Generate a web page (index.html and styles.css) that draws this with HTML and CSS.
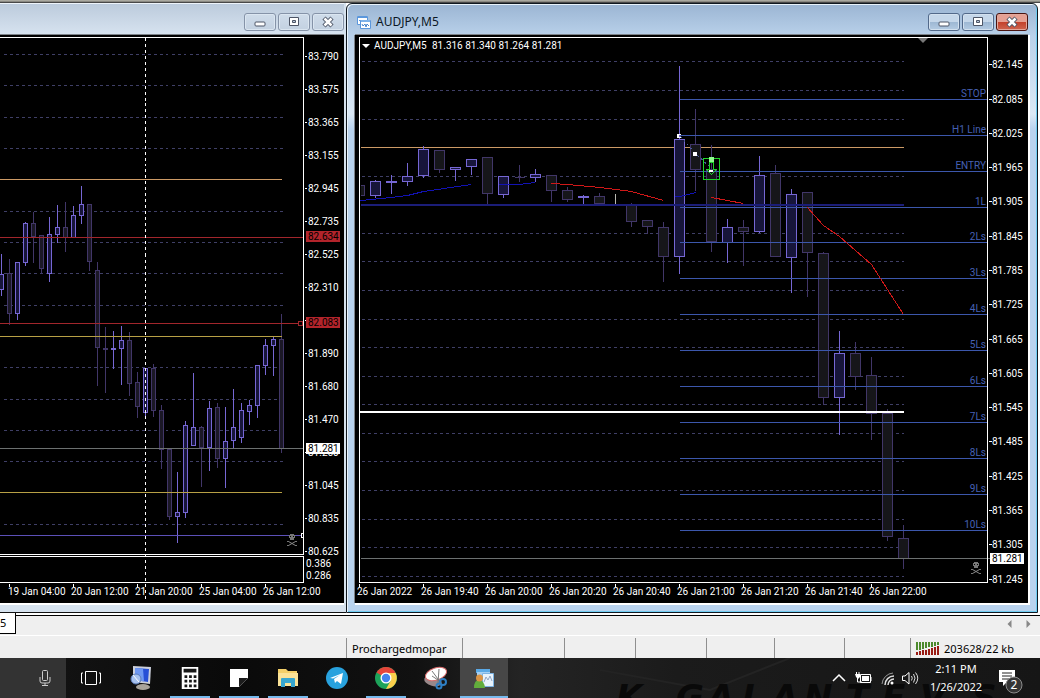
FILE: index.html
```html
<!DOCTYPE html>
<html lang="en">
<head>
<meta charset="utf-8">
<title>AUDJPY,M5</title>
<link rel="stylesheet" href="styles.css">
</head>
<body>
<svg class="defs" aria-hidden="true">
  <defs>
    <symbol id="i-min" viewBox="0 0 14 12"><rect x="2" y="6" width="10" height="4" rx="1" fill="#fff" stroke="#4d5566"/></symbol>
    <symbol id="i-max" viewBox="0 0 14 12"><path d="M2.500 1.500h9v8h-9z" fill="#fff" stroke="#4d5566"/><path d="M5.500 4.500h3v2h-3z" fill="#b9c8da" stroke="#4d5566"/></symbol>
    <symbol id="i-close" viewBox="0 0 14 12"><path d="M3 2l8 8M11 2l-8 8" stroke="#4d5566" stroke-width="4.500"/><path d="M3.500 2.500l7 7M10.500 2.500l-7 7" stroke="#fff" stroke-width="2.500"/></symbol>
    <symbol id="skull" viewBox="0 0 10 13"><path d="M3 0h4v1h1v3H7v2H3V4H2V1h1z" fill="#777"/><path d="M3 2h1v1H3zM6 2h1v1H6z" fill="#000"/><path d="M1.500 7.500l7 4M8.500 7.500l-7 4" stroke="#888"/><path d="M0 7.500h2M8 7.500h2M0 11.500h2M8 11.500h2" stroke="#777"/></symbol>
  </defs>
</svg>
<main class="workspace">
  <section class="window window-back" aria-label="Chart window">
    <header class="titlebar">
      <div class="controls">
        <button class="control" aria-label="Minimize"><svg viewBox="0 0 14 12"><use href="#i-min"/></svg></button>
        <button class="control" aria-label="Maximize"><svg viewBox="0 0 14 12"><use href="#i-max"/></svg></button>
        <button class="control" aria-label="Close"><svg viewBox="0 0 14 12"><use href="#i-close"/></svg></button>
      </div>
    </header>
    <svg class="chart" viewBox="0 35 344 568" role="img" aria-label="Four hour candles">
      <g class="crisp" transform="translate(.5 .5)">
        <path class="grid" d="M3 54H282M3 85H282M3 117H282M3 148H282M3 211H282M3 242H282M3 273H282M3 305H282M3 367H282M3 399H282M3 430H282M3 461H282M3 524H282"/>
        <path class="bear" d="M9 258V324M33 211V262M41 235V273M65 201V251M89 204V270M97 261V385M105 326V392M129 331V395M137 371V417M153 363V416M161 404V468M169 448V519M201 425V486M217 402V467M281 313V452"/>
        <path class="bear body" d="M7 273h4v40h-4zM31 223h4v13h-4zM39 235h4v33h-4zM63 227h4v10h-4zM87 204h4v57h-4zM95 270h4v77h-4zM103 348h4v1h-4zM127 340h4v43h-4zM135 382h4v24h-4zM151 368h4v42h-4zM159 410h4v39h-4zM167 449h4v67h-4zM199 427h4v20h-4zM215 407h4v51h-4zM279 339h4v109h-4z"/>
        <path class="bull" d="M1 253V295M17 261V319M25 221V265M49 216V281M57 204V242M73 205V237M81 185V223M113 330V368M121 325V384M145 367V417M177 471V542M185 420V517M193 372V445M209 400V470M225 406V487M233 388V448M241 402V442M249 399V424M257 364V417M265 338V374M273 335V375"/>
        <path class="bull body" d="M-1 274h4v15h-4zM15 262h4v51h-4zM23 223h4v39h-4zM47 234h4v39h-4zM55 227h4v7h-4zM71 215h4v22h-4zM79 204h4v11h-4zM111 348h4v1h-4zM119 340h4v8h-4zM143 368h4v44h-4zM175 512h4v4h-4zM183 425h4v87h-4zM191 427h4v18h-4zM207 408h4v39h-4zM223 441h4v17h-4zM231 427h4v13h-4zM239 410h4v27h-4zM247 405h4v6h-4zM255 365h4v40h-4zM263 345h4v20h-4zM271 339h4v6h-4z"/>
        <path class="orange" d="M-1 179H281"/>
        <path class="gold" d="M-1 336H281M-1 492H281"/>
        <path class="red" d="M-1 237H303M-1 323H298M298 321h4v4h-4z"/>
        <path class="bid" d="M-1 448H303"/>
        <path class="violet" d="M-1 535H300"/>
        <path class="cursor" d="M145 37V600"/>
        <path class="frame" d="M-1 37H303V554H-1M-1 556H303V582H-1M303 533h-2v4h2"/>
        <path class="frame" d="M304 56h2M304 89h2M304 122h2M304 155h2M304 188h2M304 221h2M304 254h2M304 287h2M304 320h2M304 353h2M304 386h2M304 419h2M304 452h2M304 485h2M304 518h2M304 551h2M9 583v3M73 583v3M137 583v3M201 583v3M265 583v3"/>
      </g>
      <use href="#skull" x="287" y="534" width="10" height="13"/>
      <g class="label">
        <text x="308" y="60">83.790</text><text x="308" y="93">83.575</text><text x="308" y="126">83.365</text><text x="308" y="159">83.155</text><text x="308" y="192">82.945</text><text x="308" y="225">82.735</text><text x="308" y="258">82.525</text><text x="308" y="291">82.310</text><text x="308" y="357">81.890</text><text x="308" y="390">81.680</text><text x="308" y="423">81.470</text><text x="308" y="456">81.260</text><text x="308" y="489">81.045</text><text x="308" y="522">80.835</text><text x="308" y="555">80.625</text>
        <text x="306" y="567">0.386</text><text x="306" y="579">0.286</text>
        <text x="8" y="595">19 Jan 04:00</text><text x="71" y="595">20 Jan 12:00</text><text x="135" y="595">21 Jan 20:00</text><text x="199" y="595">25 Jan 04:00</text><text x="263" y="595">26 Jan 12:00</text>
      </g>
      <path class="tag-red" d="M306 231h34v11h-34zM306 317h34v11h-34z"/>
      <path class="tag-bid" d="M306 443h34v11h-34z"/>
      <g class="label tag-text"><text x="308" y="240">82.634</text><text x="308" y="326">82.083</text><text x="308" y="452">81.281</text></g>
    </svg>
  </section>
  <section class="window window-front" aria-label="AUDJPY,M5">
    <header class="titlebar">
      <svg class="app-icon" viewBox="0 0 14 14"><path d="M.500 1.500h10v8H.500z" fill="#fff" stroke="#5b97dc"/><path d="M1 2h9" stroke="#5b97dc" stroke-width="2"/><path d="M2 6l1-1 1 2 1-2" fill="none" stroke="#5b97dc"/><path d="M3.500 5.500h10v8h-10z" fill="#fff" stroke="#5b97dc"/><path d="M4 6h9" stroke="#7db2ea" stroke-width="2"/><path d="M5 9l1 2 2-2 1 3 1-3 2 2" fill="none" stroke="#4a86cc"/></svg>
      <h1 class="title">AUDJPY,M5</h1>
      <div class="controls">
        <button class="control" aria-label="Minimize"><svg viewBox="0 0 14 12"><use href="#i-min"/></svg></button>
        <button class="control" aria-label="Maximize"><svg viewBox="0 0 14 12"><use href="#i-max"/></svg></button>
        <button class="control control-close" aria-label="Close"><svg viewBox="0 0 14 12"><use href="#i-close"/></svg></button>
      </div>
    </header>
    <svg class="chart" viewBox="355 35 673 568" role="img" aria-label="AUDJPY five minute candles">
      <g class="crisp" transform="translate(.5 .5)">
        <path class="grid" d="M361 61H903M361 90H903M361 119H903M361 176H903M361 233H903M361 261H903M361 290H903M361 319H903M361 347H903M361 376H903M361 404H903M361 433H903M361 461H903M361 490H903M361 519H903M361 547H903M361 576H903"/>
        <path class="orange" d="M360 147H903"/>
        <path class="bear" d="M439 150V172M487 157V204M519 164V181M551 175V201M567 186V201M599 192V203M631 202V226M647 219V233M663 221V281M695 108V190M711 144V251M743 219V265M775 164V256M807 191V296M823 251V404M855 341V389M871 356V439M887 408V540M903 524V568"/>
        <path class="bear body bear-wide" d="M360 185h4v10h-4M434 150h10v19h-10zM482 157h10v36h-10zM514 177h10M546 175h10v15h-10zM562 190h10v9h-10zM594 196h10v7h-10zM626 205h10v16h-10zM642 220h10v6h-10zM658 227h10v29h-10zM690 144h10v25h-10zM706 169h10v72h-10zM738 227h10v4h-10zM770 173h10v83h-10zM802 192h10v60h-10zM818 253h10v144h-10zM850 353h10v23h-10zM866 375h10v38h-10zM882 413h10v123h-10zM898 538h10v20h-10z"/>
        <path class="bull" d="M375 179V197M391 174V193M407 162V185M423 145V177M455 166V180M471 158V174M503 176V197M535 168V181M583 194V204M679 65V273M727 218V262M759 155V232M791 188V292M839 330V434"/>
        <path class="bull body" d="M370 181h10v14h-10zM386 181h10v1h-10zM402 176h10v5h-10zM418 149h10v26h-10zM450 167h10v2h-10zM466 159h10v7h-10zM498 176h10v18h-10zM530 174h10v3h-10zM578 196h10v1h-10zM674 139h10v117h-10zM722 227h10v15h-10zM754 175h10v56h-10zM786 194h10v63h-10zM834 353h10v44h-10z"/>
        <path class="pale" d="M615 193V204"/>
        <path class="navy" d="M360 204H903M360 205H903"/>
        <path class="level" d="M679 99H987M679 135H987M679 171H987M679 207H987M679 242H987M679 278H987M679 314H987M679 350H987M679 386H987M679 422H987M679 458H987M679 494H987M679 530H987"/>
        <path class="bid" d="M360 558H991"/>
        <path class="ma-blue" d="M360 200L391 197 407 195 423 191 471 184M498 184H519L535 182M674 196H679L696 192"/>
        <path class="ma-red" d="M551 183L567 184 600 187 631 191 663 200M711 197L727 200 743 203M807 207L823 225 839 236 855 250 871 264 903 314"/>
        <path class="frame" d="M359 411H903M359 412H903M359 582V37H987V582H359M988 64h3M988 99h3M988 133h3M988 167h3M988 201h3M988 236h3M988 270h3M988 304h3M988 339h3M988 373h3M988 407h3M988 441h3M988 476h3M988 510h3M988 544h3M988 579h3M359 583v3M423 583v3M487 583v3M551 583v3M615 583v3M679 583v3M743 583v3M807 583v3M871 583v3"/>
        <path class="trade-line" d="M680 136L695 153 711 168"/>
        <path class="trade-box" d="M703 158h16v21h-16z"/>
        <path class="trade-box" d="M709 162V169h-3l5 5 5-5h-3V162z"/>
      </g>
      <path fill="#fff" d="M677 134h4v1h-2v2h2v1h-4zM693 152h4v4h-4zM709 170h4v2h-4z"/>
      <path fill="#8dfc8d" d="M709 157h5v5h-5z"/>
      <path fill="#fff" d="M362 44h8l-4 4z"/>
      <path fill="#777" d="M918 38h10l-5 5z"/>
      <use href="#skull" x="971" y="562" width="10" height="13"/>
      <g class="label">
        <text x="374" y="49">AUDJPY,M5</text><text x="432" y="49">81.316 81.340 81.264 81.281</text>
        <text x="992" y="68">82.145</text><text x="992" y="103">82.085</text><text x="992" y="137">82.025</text><text x="992" y="171">81.965</text><text x="992" y="205">81.905</text><text x="992" y="240">81.845</text><text x="992" y="274">81.785</text><text x="992" y="308">81.725</text><text x="992" y="343">81.665</text><text x="992" y="377">81.605</text><text x="992" y="411">81.545</text><text x="992" y="445">81.485</text><text x="992" y="480">81.425</text><text x="992" y="514">81.365</text><text x="992" y="548">81.305</text><text x="992" y="583">81.245</text>
        <text x="357" y="595">26 Jan 2022</text><text x="421" y="595">26 Jan 19:40</text><text x="485" y="595">26 Jan 20:00</text><text x="549" y="595">26 Jan 20:20</text><text x="613" y="595">26 Jan 20:40</text><text x="677" y="595">26 Jan 21:00</text><text x="741" y="595">26 Jan 21:20</text><text x="805" y="595">26 Jan 21:40</text><text x="869" y="595">26 Jan 22:00</text>
      </g>
      <path class="tag-bid" d="M990 553h34v11h-34z"/>
      <g class="label tag-text"><text x="992" y="562">81.281</text></g>
      <g class="label level-text">
        <text x="986" y="97">STOP</text><text x="986" y="133">H1 Line</text><text x="986" y="169">ENTRY</text><text x="986" y="205">1L</text><text x="986" y="240">2Ls</text><text x="986" y="276">3Ls</text><text x="986" y="312">4Ls</text><text x="986" y="348">5Ls</text><text x="986" y="384">6Ls</text><text x="986" y="420">7Ls</text><text x="986" y="456">8Ls</text><text x="986" y="492">9Ls</text><text x="986" y="528">10Ls</text>
      </g>
    </svg>
  </section>
</main>
<nav class="tabs" aria-label="Charts">
  <button class="tab">5</button>
  <div class="tab-scroll">
    <button class="arrow" aria-label="Previous"><svg viewBox="0 0 5 8"><path d="M4.500 0v8L.500 4z"/></svg></button>
    <button class="arrow" aria-label="Next"><svg viewBox="0 0 5 8"><path d="M.500 0v8l4-4z"/></svg></button>
  </div>
</nav>
<div class="status">
  <span class="cell"></span><span class="cell">Prochargedmopar</span><span class="cell"></span><span class="cell"></span><span class="cell"></span><span class="cell"></span><span class="cell"></span><span class="cell"></span>
  <span class="cell"><svg class="signal" viewBox="0 0 24 13"><path d="M1 0v8M4 0v8M7 0v7M10 0v6M13 0v5M16 0v5M19 0v4M22 0v3" stroke="#4c8a2c" stroke-width="2"/><path d="M1 10v3M4 9v4M7 8v5M10 8v5M13 7v6M16 6v7M19 5v8M22 4v9" stroke="#9a1c14" stroke-width="2"/></svg>203628/22 kb</span>
</div>
<footer class="taskbar">
  <svg class="wallpaper" viewBox="0 0 440 40" preserveAspectRatio="xMaxYMin slice" aria-hidden="true"><path d="M0 12L110 32 190 0" class="streak"/><text y="51" x="16 76 108 142 172 204 246 282 320 372">KGALANTEVS</text></svg>
  <button class="mic" aria-label="Voice search"><svg viewBox="0 0 12 16"><rect x="3.500" y=".5" width="5" height="10" rx="1" fill="none" stroke="#ccc"/><path d="M1 7v4q0 2 2 2h6q2 0 2-2V7M6 13v2.500M3 15.500h6" fill="none" stroke="#ccc"/></svg></button>
  <button class="task task-view" aria-label="Task view"><svg viewBox="0 0 22 22"><path d="M5.500 4.500h11v13h-11zM3 6H1.500v10H3M19 6h1.500v10H19" fill="none" stroke="#fff"/></svg></button>
  <button class="task" aria-label="Remote desktop"><svg viewBox="0 0 22 22"><ellipse cx="13" cy="20" rx="7" ry="3" fill="#a9a49c"/><path d="M3 -1l18 1-1 17-17-2z" fill="#ccd0dc"/><path d="M5 1l14 1-1 13-13-2z" fill="#274fd6"/><path d="M5 1l8 .5 1 13-9-1.500z" fill="#6f98f2"/><circle cx="6" cy="12" r="5" fill="#a7c2ef" stroke="#5b7bb8"/><path d="M3 8l6 7" stroke="#fff"/></svg></button>
  <button class="task open" aria-label="Calculator"><svg viewBox="0 0 22 24"><path d="M2 0h18v24H2z" fill="#fff"/><path d="M4 2h14v4H4zM5 9h3v3H5zM10 9h3v3h-3zM15 9h3v3h-3zM5 14h3v3H5zM10 14h3v3h-3zM15 14h3v3h-3zM5 19h3v3H5zM10 19h3v3h-3zM15 19h3v3h-3z" fill="#171717"/></svg></button>
  <button class="task open" aria-label="Sticky notes"><svg viewBox="0 0 22 22"><path d="M2 2h18v9l-9 9H2z" fill="#fff"/><path d="M11 11h9l-9 9z" fill="#1c1c1c"/></svg></button>
  <button class="task open" aria-label="File explorer"><svg viewBox="0 0 22 22"><path d="M1 2h8l2 2h9v15H1z" fill="#f3cf69"/><path d="M1 6h20v13H1z" fill="#fae297"/><path d="M4 20v-8q0-1 1-1h12q1 0 1 1v8h-4v-4H8v4z" fill="#37a6cf"/></svg></button>
  <button class="task" aria-label="Telegram"><svg viewBox="0 0 22 22"><circle cx="11" cy="11" r="11" fill="#28a2de"/><path d="M4 11l13-5-2 11-4-3-2 2-1-4 6-4-7 3.500z" fill="#fff"/></svg></button>
  <button class="task open" aria-label="Chrome"><svg viewBox="0 0 22 22"><circle cx="11" cy="11" r="11" fill="#1da35a"/><path d="M11 11L1.500 5.500A11 11 0 0 1 20.500 5.500z" fill="#e6453a"/><path d="M11 11V6h9.600A11 11 0 0 1 11 22l4.500-8z" fill="#fcd04c"/><circle cx="11" cy="11" r="5.500" fill="#fff"/><circle cx="11" cy="11" r="4.200" fill="#4383ee"/></svg></button>
  <button class="task" aria-label="Snipping tool"><svg viewBox="0 0 22 22"><ellipse cx="9" cy="14" rx="9" ry="5" fill="#99888a" transform="rotate(15 9 14)"/><ellipse cx="12" cy="7" rx="11" ry="6" fill="#fff" stroke="#d56a6a" transform="rotate(-18 12 7)"/><path d="M8 4l9 12M15 2l-1 14M8 9l9 6" stroke="#777"/><circle cx="19" cy="15" r="3" fill="none" stroke="#2e7fc4" stroke-width="2"/><circle cx="15" cy="19" r="2.500" fill="none" stroke="#2e7fc4" stroke-width="2"/></svg></button>
  <button class="task open active" aria-label="Trading terminal"><svg viewBox="0 0 22 22"><path d="M3 2h14v4H3z" fill="#5aa9e6"/><path d="M4 5h13v12H4z" fill="#a5d0f3"/><path d="M9.500 6.500h11v13h-11z" fill="#e9f3fc" stroke="#7db4e4"/><path d="M11 15l2-5 2 3 2-4 2 5" fill="none" stroke="#91a6c4"/><path d="M1 21q0-8 5-8t6 8z" fill="#62ad3c"/><circle cx="6.500" cy="11" r="3.500" fill="#d99445"/></svg></button>
  <div class="tray">
    <svg class="tray-icon" viewBox="0 0 20 20"><path d="M4 13l6-6 6 6" fill="none" stroke="#fff" stroke-width="1.500"/></svg>
    <svg class="tray-icon" viewBox="0 0 20 20"><path d="M7.500 6.500h10v8h-10zM18 9v4" fill="none" stroke="#fff"/><path d="M9 8h7v5H9zM2 6h5v3L5 11 3 9z" fill="#fff"/><path d="M3.500 4v3M6 4v3M4.500 10v4H9" stroke="#fff" fill="none"/></svg>
    <svg class="tray-icon" viewBox="0 0 20 20"><path d="M5 16A12 12 0 0 1 16 5" fill="none" stroke="#999"/><path d="M8 17a9 9 0 0 1 9-9M11 17a6 6 0 0 1 6-6" fill="none" stroke="#ddd" stroke-width="1.500"/><circle cx="15" cy="15" r="1.500" fill="#fff"/></svg>
    <svg class="tray-icon" viewBox="0 0 20 20"><path d="M1.500 8v4.500H4l4 3.500V4.500L4 8z" fill="none" stroke="#fff"/><path d="M10.500 8q1.500 2 0 4.500M12.500 6q3 4 0 8.500M14.500 4.500q4.500 5.500 0 11.500" fill="none" stroke="#ddd"/></svg>
    <div class="clock"><time>2:11 PM</time><time>1/26/2022</time></div>
    <button class="notices" aria-label="Notifications"><svg viewBox="0 0 26 26"><path d="M1 2h16v12H9l-4 4v-4H1z" fill="#fff"/><path d="M4 5h10M4 8h10M4 11h8" stroke="#222"/><circle cx="16" cy="17" r="8" fill="#343434" stroke="#8b8b8b"/><text x="16" y="21" text-anchor="middle" class="badge">2</text></svg></button>
  </div>
</footer>
</body>
</html>
```
FILE: styles.css
```css
* { box-sizing: border-box; }
body {
  margin: 0;
  min-height: 100vh;
  display: flex;
  flex-direction: column;
  background: #efefef;
  font-family: "Noto Sans", "Open Sans", sans-serif;
  overflow-x: hidden;
}
button { padding: 0; border: 0; background: none; font: inherit; color: inherit; }
svg { display: block; overflow: visible; }
.defs { position: absolute; width: 0; height: 0; }

.workspace {
  display: grid;
  grid-template-columns: 346fr 694fr;
  padding-top: 3px;
  background: linear-gradient(#aaa9a0 0 1px, #8a8982 1px 2px, #484848 2px 3px, #fff 3px);
}
.window { min-width: 0; }
.window-back {
  padding-right: 2px;
  padding-bottom: 9px;
  background: #d6e2ee;
  border-bottom: 1px solid #111;
}
.window-front {
  margin-right: 2px;
  padding: 0 9px 8px 8px;
  border: 1px solid #101820;
  border-radius: 6px 6px 0 0;
  background: linear-gradient(#9bb5d3, #b9d1ea 32px, #dbe9f6 110px, #b9d3ee 125px);
  box-shadow: inset 1px 1px #e9f3fb, inset -1px -1px #6fcdf2;
}
.window-front .titlebar { height: 31px; }
.titlebar {
  display: flex;
  align-items: center;
  height: 32px;
  padding-top: 4px;
}
.window-back .titlebar { background: linear-gradient(#bccbdc, #d7e3f0); border-top: 1px solid #eef4fa; }
.app-icon { width: 14px; height: 14px; margin-left: 2px; }
.title { margin: 0 0 0 5px; font-size: 12px; line-height: 16px; font-weight: 400; color: #0b1724; }
.controls { display: flex; gap: 2px; margin-left: auto; }
.control {
  display: grid;
  place-items: center;
  width: 32px;
  height: 18px;
  border: 1px solid #8593a8;
  border-radius: 3px;
  background: linear-gradient(#cfdcea, #c3d1e1);
  box-shadow: inset 0 0 0 1px #dbe6f1;
}
.window-front .control {
  border-color: #52698a;
  background: linear-gradient(#c5d7ea 50%, #9db7d3 50%, #b4cbe3);
  box-shadow: inset 0 0 0 1px #d3e1ef;
}
.window-front .control-close {
  border-color: #4a1410;
  background: linear-gradient(#e5a093 50%, #c3402a 50%, #cf6650);
  box-shadow: inset 0 0 0 1px #e3a79b;
}
.control svg { width: 14px; height: 12px; }

.chart { width: 100%; height: auto; background: #000; box-shadow: 0 -1px #7d8288, 0 2px #fff; }
.window-front .chart { box-shadow: 0 -1px #7d8288, -1px 0 #7d8288, 1px 1px 0 1px #fff; }
.crisp { shape-rendering: crispEdges; fill: none; }
.grid { stroke: #3f3f66; stroke-dasharray: 3 3; }
.bear { stroke: #413668; }
.bull { stroke: #7667d4; }
.bear.body { fill: #1b1826; }
.bear.bear-wide { fill: #16161a; }
.bull.body { fill: #17153a; }
.pale { stroke: #b9b9b0; }
.orange { stroke: #cc9a66; }
.gold { stroke: #b7a045; }
.red { stroke: #a2262c; }
.bid { stroke: #6c7070; }
.violet { stroke: #5c50b8; }
.navy { stroke: #1b1d78; }
.level { stroke: #3c57ac; }
.frame { stroke: #fff; }
.cursor { stroke: #fff; stroke-dasharray: 3 3; }
.ma-blue { stroke: #1212b4; }
.ma-red { stroke: #d01818; }
.trade-line { stroke: #4a5a9a; stroke-dasharray: 2 3; }
.trade-box { stroke: #1fd62a; }
.label { font-family: Roboto, "Liberation Sans", sans-serif; font-size: 10px; fill: #fff; }
.label.tag-text { fill: #000; }
.label.level-text { fill: #4660b4; text-anchor: end; }
.tag-red { fill: #b3242b; }
.tag-bid { fill: #fff; }

.tabs {
  display: flex;
  justify-content: space-between;
  height: 23px;
  border-bottom: 1px solid #fff;
  background: linear-gradient(#fff 2px, #000 2px 3px, #efefef 3px);
}
.tab {
  width: 16px;
  height: 21px;
  border-right: 1px solid #000;
  border-bottom: 1px solid #000;
  background: #fff;
  font-size: 11px;
  line-height: 20px;
  text-align: left;
}
.tab-scroll { display: flex; align-items: center; gap: 14px; padding-right: 9px; }
.arrow svg { width: 5px; height: 8px; fill: #888; }

.status {
  display: grid;
  grid-template-columns: 346fr 116fr 102fr 71fr 71fr 68fr 70fr 66fr 130fr;
  height: 22px;
  padding-top: 2px;
  font-size: 11px;
  line-height: 19px;
}
.cell {
  display: flex;
  align-items: center;
  min-width: 0;
  padding-left: 5px;
  white-space: nowrap;
  border-left: 1px solid #8f8f8f;
}
.cell:first-child { border-left: 0; }
.signal { width: 24px; height: 13px; margin-right: 4px; }

.taskbar {
  position: relative;
  display: flex;
  gap: 1px;
  height: 40px;
  overflow: hidden;
  background: linear-gradient(90deg, #151515, #0a0a0a 22%, #111 40%, #242424 50%, #1b1b1b 65%, #161616);
  color: #fff;
}
.wallpaper { position: absolute; right: 0; top: 0; width: 440px; height: 40px; }
.wallpaper text { font: italic 700 34px "DejaVu Sans", sans-serif; fill: #090909; }
.streak { fill: none; stroke: #232323; stroke-width: 2; }
.mic { flex: none; display: grid; place-items: center; width: 66px; padding-left: 24px; background: #333; }
.mic svg { width: 12px; height: 16px; }
.task { position: relative; flex: none; display: grid; place-items: center; width: 48px; }
.task svg { width: 22px; height: 22px; }
.task-view { margin-right: 1px; }
.open { background: linear-gradient(#76b9ed, #76b9ed) center bottom / 40px 2px no-repeat; }
.active { background-color: #474747; background-size: 48px 2px; }
.tray { position: relative; display: flex; align-items: center; margin-left: auto; }
.tray-icon { width: 20px; height: 20px; margin-right: 4px; }
.clock { display: flex; flex-direction: column; align-items: center; width: 62px; font-size: 11px; line-height: 18px; }
.notices { width: 53px; padding: 6px 0 0 11px; }
.notices svg { width: 26px; height: 26px; }
.badge { font-size: 12px; fill: #fff; }
```
